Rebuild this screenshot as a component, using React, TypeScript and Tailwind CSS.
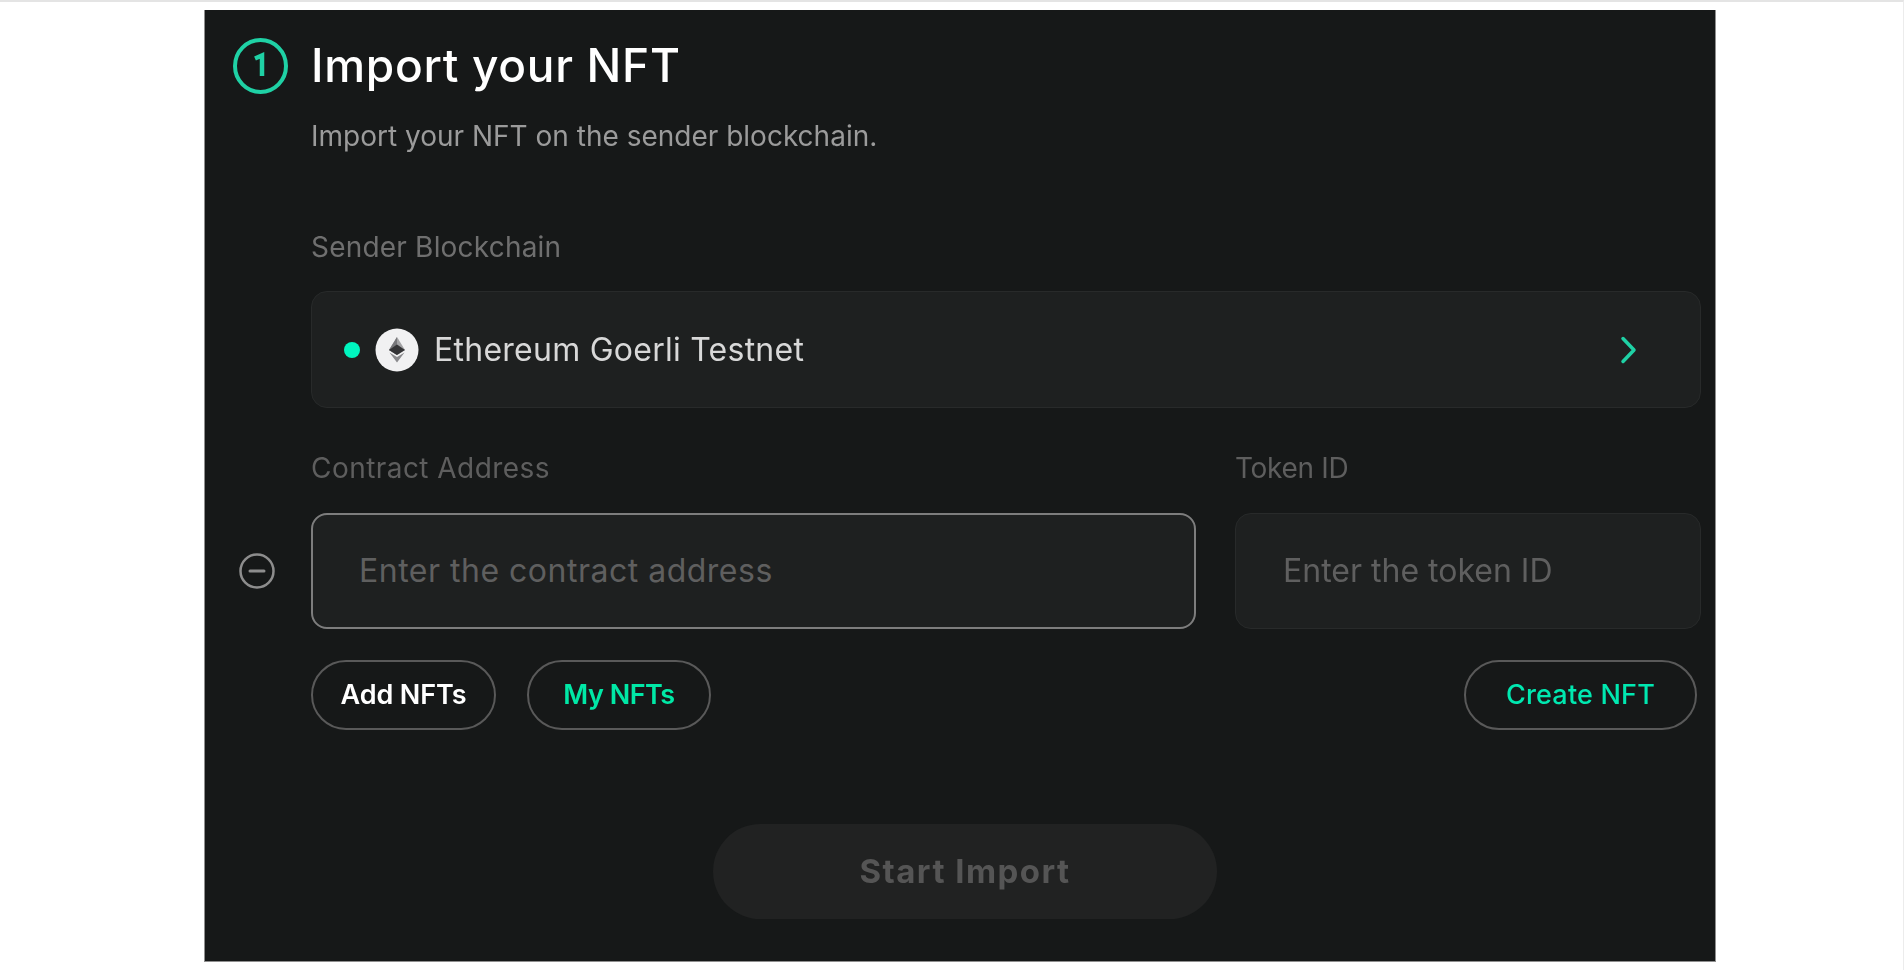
function EthIcon() {
  return (
    <svg width="44" height="44" viewBox="0 0 44 44" className="shrink-0">
      <circle cx="22" cy="22" r="21.5" fill="#f1f1f2" />
      <path d="M22 9 L14 22 L22 27 L30 22 Z" fill="#a2a2a4" />
      <path d="M22 9 L22 27 L14 22 Z" fill="#77777a" />
      <path d="M22 16.5 L14 22 L22 27 L30 22 Z" fill="#343436" />
      <path d="M14.5 24.5 L22 34.5 L29.5 24.5 L22 29 Z" fill="#8a8a8d" />
    </svg>
  );
}

function StepBadge() {
  return (
    <svg width="55" height="56" viewBox="0 0 55 56">
      <ellipse cx="27.5" cy="28" rx="25.5" ry="26" fill="none" stroke="#1fd1a5" strokeWidth="4" />
      <path d="M22 20.5 L29 17.5 V38" fill="none" stroke="#1fd1a5" strokeWidth="4.5" />
    </svg>
  );
}

function MinusCircle() {
  return (
    <svg width="36" height="36" viewBox="0 0 36 36">
      <circle cx="18" cy="18" r="16.5" fill="none" stroke="#8d8d8d" strokeWidth="2.5" />
      <path d="M11 18 H25" stroke="#8d8d8d" strokeWidth="3" strokeLinecap="round" />
    </svg>
  );
}

function Chevron() {
  return (
    <svg width="18" height="28" viewBox="0 0 18 28">
      <path d="M3 2.5 L14 14 L3 25.5" fill="none" stroke="#1fd1a5" strokeWidth="3.5" strokeLinecap="round" strokeLinejoin="round" />
    </svg>
  );
}

export default function App() {
  return (
    <div className="min-h-[970px] bg-white border-t-2 border-r border-t-[#e4e4e4] border-r-[#ececec] pt-2 pl-[204px] font-['Inter','Liberation_Sans',sans-serif]">
      <div className="w-[1512px] h-[952px] bg-[#161818] border-x border-b border-[#8f8f8f]">
        <div className="h-full grid grid-cols-[106px_1fr] pr-[14px] blur-[0.5px]">
          {/* step number */}
          <div className="flex justify-center items-start pt-[28px] pl-[5px]">
            <StepBadge />
          </div>

          <div className="flex flex-col">
            <h1 className="mt-[27px] h-[56px] leading-[56px] text-[46px] font-medium tracking-[0.7px] text-white">Import your NFT</h1>
            <p className="mt-[25px] text-[28px] leading-[36px] text-[#9b9b9b]">Import your NFT on the sender blockchain.</p>

            <label className="mt-[75px] text-[28px] leading-[36px] text-[#6f6f6f] tracking-[0.2px]">Sender Blockchain</label>
            <div className="mt-[26px] h-[117px] rounded-2xl border border-[#282a2a] bg-[#1e2020] flex items-center pl-[32px] pr-[62px]">
              <span className="w-4 h-4 rounded-full bg-[#00f5bf]" />
              <span className="ml-[15px]"><EthIcon /></span>
              <span className="ml-[15px] text-[32px] text-[#d8d8d8] tracking-[0.25px]">Ethereum Goerli Testnet</span>
              <span className="ml-auto flex"><Chevron /></span>
            </div>

            <div className="mt-[42px] grid grid-cols-[885px_1fr] gap-x-[39px]">
              <label className="text-[28px] leading-[36px] text-[#5e5e5e] tracking-[0.45px]">Contract Address</label>
              <label className="text-[28px] leading-[36px] text-[#5e5e5e] tracking-[-0.3px]">Token ID</label>
              <div className="relative mt-[27px] h-[116px] rounded-2xl border-2 border-[#7d7d7d] bg-[#1e2020] flex items-center pl-[46px]">
                <span className="absolute left-[-74px] flex"><MinusCircle /></span>
                <span className="text-[32px] text-[#5f5f5f] tracking-[0.5px]">Enter the contract address</span>
              </div>
              <div className="mt-[27px] h-[116px] rounded-2xl border border-[#282a2a] bg-[#1e2020] flex items-center pl-[47px]">
                <span className="text-[32px] text-[#5f5f5f]">Enter the token ID</span>
              </div>
            </div>

            <div className="mt-[31px] flex items-center">
              <button className="w-[185px] h-[70px] rounded-full border-2 border-[#595959] text-[27px] font-semibold text-white tracking-[-0.1px]">Add NFTs</button>
              <button className="ml-[31px] w-[184px] h-[70px] rounded-full border-2 border-[#595959] text-[27px] font-semibold text-[#00e8a6] tracking-[-0.5px]">My NFTs</button>
              <button className="ml-auto mr-[4px] w-[233px] h-[70px] rounded-full border-2 border-[#595959] text-[27px] font-medium text-[#00e8b0] tracking-[0.2px]">Create NFT</button>
            </div>

            <div className="mt-[94px] ml-[402px] w-[504px] h-[95px] rounded-full bg-[#212222] flex items-center justify-center text-[33px] font-bold text-[#555555] tracking-[1.45px]">Start Import</div>
          </div>
        </div>
      </div>
    </div>
  );
}
